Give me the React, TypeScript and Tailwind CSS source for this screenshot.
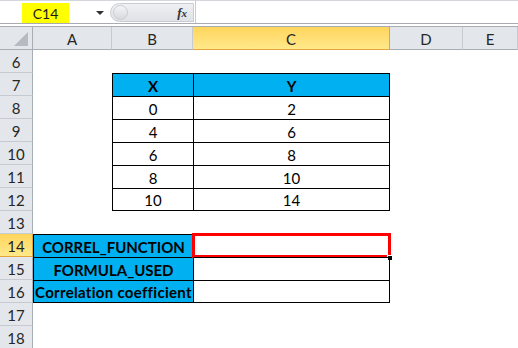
import React from "react";

const COLS = ["A", "B", "C", "D", "E"];
const xy = [
  ["0", "2"],
  ["4", "6"],
  ["6", "8"],
  ["8", "10"],
  ["10", "14"],
];
const labels = ["CORREL_FUNCTION", "FORMULA_USED", "Correlation coefficient"];

const font = { fontFamily: "Lato, 'Open Sans', sans-serif" };

const RowHead = ({ n, active }: { n: number; active?: boolean }) => (
  <div
    className={
      "h-[23px] pt-[2px] flex items-center justify-center text-[15px] leading-none border-b border-r " +
      (active
        ? "bg-gradient-to-b from-[#ffd55c] to-[#ffe98a] text-[#1f1f1f] border-b-[#e3a43a] border-r-[#e3a43a]"
        : "bg-[#e3e6eb] text-[#262626] border-b-[#c7cbd1] border-r-[#a9aeb5]")
    }
  >
    {n}
  </div>
);

export default function App() {
  return (
    <div className="w-[518px] h-[348px] overflow-hidden bg-white text-black" style={font}>
      {/* formula bar */}
      <div className="h-[23px] flex items-center border-t border-[#d3d6db] bg-white">
        <div className="w-[110px] h-full flex items-center pt-[2px]">
          <div className="ml-[22px] w-[47px] h-[20px] bg-[#ffff00] flex items-center justify-center text-[14px] text-[#1a1a1a]">
            C14
          </div>
          <div className="ml-[27px] w-0 h-0 border-l-[4px] border-r-[4px] border-t-[4px] border-l-transparent border-r-transparent border-t-[#333]" />
        </div>
        <div className="relative w-[84px] h-[19px] mt-[1px] rounded-l-[10px] bg-gradient-to-b from-[#eef0f3] to-[#dfe2e6] border border-[#c9ccd1] flex items-center justify-end pr-[6px]">
          <div className="absolute left-[2px] top-[1px] w-[15px] h-[15px] rounded-full bg-gradient-to-b from-[#f4f5f7] to-[#d6d9de] border border-[#c9ccd1]" />
          <span className="italic font-bold text-[13px] text-[#333]" style={{ fontFamily: "'Liberation Serif', serif" }}>
            f<span className="text-[11px]">x</span>
          </span>
        </div>
        <div className="flex-1 h-full border-l border-[#c9ccd1] ml-[1px]" />
      </div>
      <div className="h-[4px] border-t border-b border-[#a9adb3] bg-white" />

      {/* column headers */}
      <div className="grid grid-cols-[33px_79px_81px_197px_73px_1fr] h-[23px]">
        <div className="relative bg-[#e3e6eb] border-r border-b border-[#a9aeb5]">
          <svg className="absolute right-[4px] bottom-[3px]" width="14" height="14" viewBox="0 0 14 14">
            <polygon points="14,0 14,14 0,14" fill="#b6bac1" />
          </svg>
        </div>
        {COLS.map((c) =>
          c === "C" ? (
            <div
              key={c}
              className="flex items-center justify-center pt-[2px] text-[15px] leading-none bg-gradient-to-b from-[#ffd55c] to-[#ffe98a] border-r border-b border-[#e3a43a] text-[#1f1f1f]"
            >
              {c}
            </div>
          ) : (
            <div
              key={c}
              className="flex items-center justify-center pt-[2px] text-[15px] leading-none bg-[#e3e6eb] border-r border-b border-r-[#c7cbd1] border-b-[#a9aeb5] text-[#262626]"
            >
              {c}
            </div>
          )
        )}
      </div>

      {/* sheet */}
      <div className="grid grid-cols-[33px_79px_81px_197px_73px_1fr] auto-rows-[23px] leading-none">
        {/* row 6 */}
        <RowHead n={6} />
        <div className="col-span-5" />

        {/* row 7 header */}
        <RowHead n={7} />
        <div />
        <div className="bg-[#00b0f0] border-t border-l border-black pt-[2px] flex items-center justify-center font-bold text-[15px]">X</div>
        <div className="bg-[#00b0f0] border-t border-l border-r border-black pt-[2px] flex items-center justify-center font-bold text-[15px]">Y</div>
        <div className="col-span-2" />

        {xy.map(([x, y], i) => (
          <React.Fragment key={i}>
            <RowHead n={8 + i} />
            <div />
            <div className={"border-t border-l border-black pt-[2px] flex items-center justify-center text-[15px] " + (i === xy.length - 1 ? "border-b" : "")}>{x}</div>
            <div className={"border-t border-l border-r border-black pt-[2px] flex items-center justify-center text-[15px] " + (i === xy.length - 1 ? "border-b" : "")}>{y}</div>
            <div className="col-span-2" />
          </React.Fragment>
        ))}

        <RowHead n={13} />
        <div className="col-span-5" />

        {labels.map((l, i) => (
          <React.Fragment key={l}>
            <RowHead n={14 + i} active={i === 0} />
            <div
              className={
                "col-span-2 bg-[#00b0f0] border-t border-l border-black pt-[2px] flex items-center justify-center font-bold text-[15px] whitespace-nowrap " +
                (i === labels.length - 1 ? "border-b tracking-[0.3px]" : "")
              }
            >
              {l}
            </div>
            <div className={"relative border-t border-l border-r border-black " + (i === labels.length - 1 ? "border-b" : "")}>
              {i === 0 && (
                <>
                  <div className="absolute -left-[2px] -top-[2px] -right-[2px] -bottom-[1px] border-[3px] border-[#ff0000]" />
                  <div className="absolute -right-[4px] -bottom-[4px] w-[6px] h-[6px] bg-black border border-white" />
                </>
              )}
            </div>
            <div className="col-span-2" />
          </React.Fragment>
        ))}

        <RowHead n={17} />
        <div className="col-span-5" />
        <RowHead n={18} />
        <div className="col-span-5" />
      </div>
    </div>
  );
}
